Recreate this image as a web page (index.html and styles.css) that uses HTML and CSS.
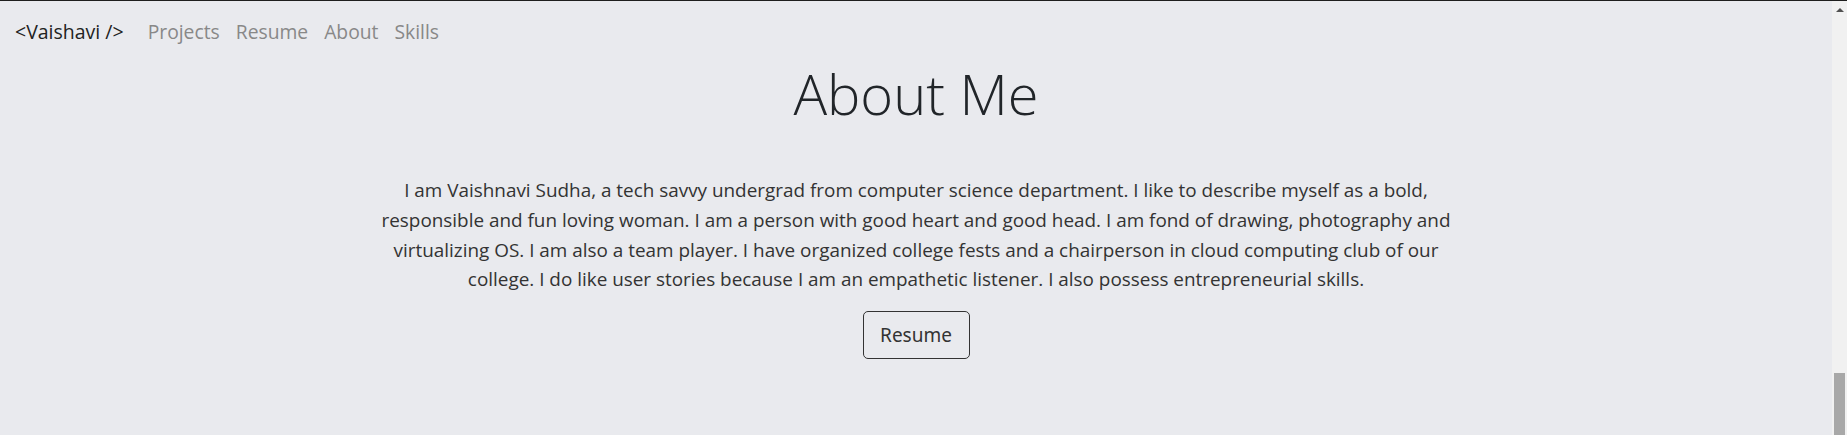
FILE: index.html
```html
<!DOCTYPE html>
<html lang="en">
<head>
<meta charset="utf-8">
<title>Vaishavi - About</title>
<link rel="stylesheet" href="styles.css">
</head>
<body>
<div class="window">
  <div class="page">
    <nav class="nav">
      <a class="brand" href="#">&lt;Vaishavi /&gt;</a>
      <a class="nav-link" href="#">Projects</a>
      <a class="nav-link" href="#">Resume</a>
      <a class="nav-link" href="#">About</a>
      <a class="nav-link" href="#">Skills</a>
    </nav>
    <section class="about">
      <h1 class="title">About Me</h1>
      <p class="text">I am Vaishnavi Sudha, a tech savvy undergrad from computer science department. I like to describe myself as a bold,<br>responsible and fun loving woman. I am a person with good heart and good head. I am fond of drawing, photography and<br>virtualizing OS. I am also a team player. I have organized college fests and a chairperson in cloud computing club of our<br>college. I do like user stories because I am an empathetic listener. I also possess entrepreneurial skills.</p>
      <button class="btn" type="button">Resume</button>
    </section>
  </div>
  <div class="scrollbar">
    <div class="arrow"></div>
    <div class="track"></div>
    <div class="thumb"></div>
  </div>
</div>
</body>
</html>
```

FILE: styles.css
```css
html, body {
  margin: 0;
  padding: 0;
  height: 100%;
  overflow: hidden;
}
body {
  background: #e9eaee;
  font-family: "Open Sans", "Noto Sans", sans-serif;
  color: #222;
}
.window {
  display: flex;
  height: 435px;
  box-sizing: border-box;
  border-top: 1px solid #1e1e1e;
}
.page {
  flex: 1;
  display: flex;
  flex-direction: column;
}
.nav {
  display: flex;
  align-items: baseline;
  padding: 17px 15px 0;
  gap: 16px;
}
.brand {
  color: #222;
  text-decoration: none;
  font-size: 19.5px;
  margin-right: 8px;
}
.nav-link {
  color: #888;
  text-decoration: none;
  font-size: 19.3px;
}
.about {
  display: flex;
  flex-direction: column;
  align-items: center;
}
.title {
  margin: 0;
  margin-top: 15px;
  font-size: 56px;
  font-weight: 300;
  color: #212529;
  line-height: 1.2;
}
.text {
  margin: 49px 0 0;
  text-align: center;
  font-size: 18.9px;
  line-height: 29.7px;
  color: #333;
}
.btn {
  margin-top: 16px;
  width: 107px;
  height: 48px;
  background: transparent;
  border: 1px solid #333;
  border-radius: 5px;
  font-family: "Noto Sans", sans-serif;
  font-size: 19px;
  color: #333;
}
.scrollbar {
  width: 15px;
  background: #f1f1f1;
  display: flex;
  flex-direction: column;
  align-items: center;
}
.arrow {
  margin-top: 7px;
  width: 0;
  height: 0;
  border-left: 4px solid transparent;
  border-right: 4px solid transparent;
  border-bottom: 4px solid #505050;
}
.track {
  flex: 1;
}
.thumb {
  width: 11px;
  height: 62px;
  background: #a8a8a8;
}
```
